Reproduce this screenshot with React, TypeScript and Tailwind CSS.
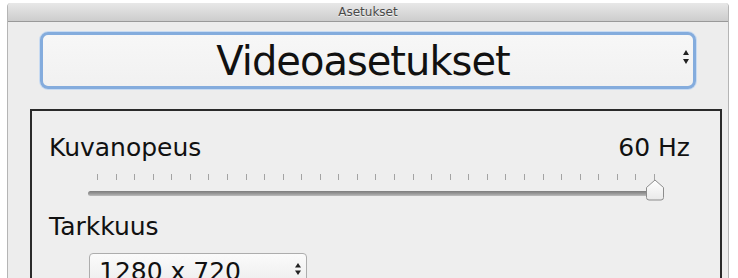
import React from "react";

const ticks = Array.from({ length: 31 }, (_, i) => i);

export default function App() {
  return (
    <div className="w-[738px] h-[278px] overflow-hidden bg-white pt-[3px] font-['DejaVu_Sans',sans-serif] text-[#111]">
      <div className="ml-[7px] w-[722px] h-[300px] rounded-t-[4px] overflow-hidden border-x border-[#b5b5b5] bg-[#ededed]">
        {/* title bar */}
        <div className="h-[19px] border-b border-[#9a9a9a] bg-[linear-gradient(#e8e8e8,#cdcdcd)] flex items-center justify-center">
          <span className="text-[12px] leading-[14px] text-[#4a4a4a] [text-shadow:0_1px_0_rgba(255,255,255,0.7)]">
            Asetukset
          </span>
        </div>

        {/* popup button */}
        <div className="mt-[10px] ml-[32px] w-[656px] h-[57px] rounded-[8px] border-[3px] border-[#84acdd] shadow-[0_0_0_1px_#c8dbf2] bg-[linear-gradient(#f7f7f7,#f1f1f1)] flex items-center">
          <div className="flex-1 flex justify-center">
            <span className="text-[40px] leading-[46px] tracking-[-1px]">Videoasetukset</span>
          </div>
          <svg width="6" height="14" viewBox="0 0 6 14" className="self-start mt-[15px] mr-[4px]">
            <path d="M0 5 L3 0 L6 5 Z" fill="#222" />
            <path d="M0 9 L3 14 L6 9 Z" fill="#222" />
          </svg>
        </div>

        {/* group box */}
        <div className="mt-[20px] ml-[22px] w-[692px] h-[200px] border-2 border-[#2a2a2a] bg-[#eeeeee] pt-[22px] pl-[17px] pr-[30px]">
          <div className="flex justify-between text-[25px] leading-[30px]">
            <span>Kuvanopeus</span>
            <span>60 Hz</span>
          </div>

          {/* slider */}
          <div className="relative mt-[11px] ml-[39px] w-[576px] h-[27px]">
            <div className="flex justify-between px-[9px] h-[6px]">
              {ticks.map((i) => (
                <div key={i} className="w-px h-[6px] bg-[#a3a3a3]" />
              ))}
            </div>
            <div className="mt-[11px] h-[5px] rounded-full bg-[linear-gradient(#7c7c7c,#9d9d9d_60%,#bdbdbd)]" />
            <svg width="20" height="22" viewBox="0 0 20 22" className="absolute left-[557px] top-[5px]">
              <defs>
                <linearGradient id="thumbg" x1="0" y1="0" x2="0" y2="1">
                  <stop offset="0" stopColor="#ffffff" />
                  <stop offset="1" stopColor="#e9e9e9" />
                </linearGradient>
              </defs>
              <path
                d="M10 1 L18.5 8.5 L18.5 18.5 Q18.5 21 16 21 L4 21 Q1.5 21 1.5 18.5 L1.5 8.5 Z"
                fill="url(#thumbg)"
                stroke="#8c8c8c"
                strokeWidth="1"
              />
            </svg>
          </div>

          <div className="mt-[11px] text-[25px] leading-[30px]">Tarkkuus</div>

          {/* select */}
          <div className="mt-[11px] ml-[40px] w-[218px] h-[34px] rounded-[4px] border border-[#adadad] bg-[linear-gradient(#fbfbfb,#ececec)] flex items-start pt-[3px] pl-[9px]">
            <span className="text-[25px] leading-[30px]">1280 x 720</span>
            <div className="flex-1" />
            <svg width="6" height="12" viewBox="0 0 6 12" className="mt-[6px] mr-[5px]">
              <path d="M0 4.5 L3 0 L6 4.5 Z" fill="#222" />
              <path d="M0 7.5 L3 12 L6 7.5 Z" fill="#222" />
            </svg>
          </div>
        </div>
      </div>
    </div>
  );
}
